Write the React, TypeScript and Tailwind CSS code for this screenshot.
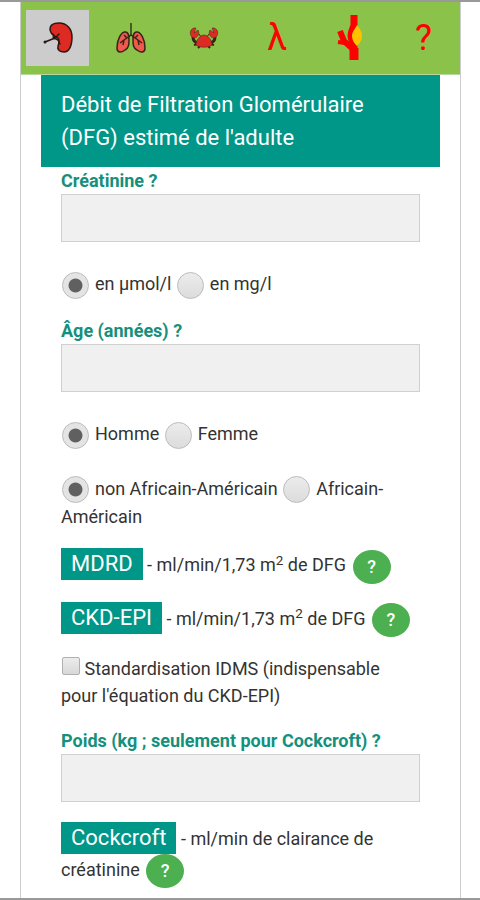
import type { ReactNode } from 'react';

function KidneyIcon() {
  return (
    <svg className="h-8 w-8" viewBox="0 0 32 32" fill="none">
      <path
        d="M8 7C8 3 12 1 17 1c8 0 13 6 13 14 0 9-3 15-8 15-4 0-7-2-6-6 1-3 2-5 0-8-3-2-8-3-8-9Z"
        fill="#dd2a22"
        stroke="#2b1713"
        strokeWidth="1.5"
      />
      <path d="M3 20l10-4 4-4M11 15l5 3 2 4M13 16l-2-4" stroke="#2b1713" strokeWidth="1.5" strokeLinecap="round" />
      <circle cx="3" cy="20" r="1.5" fill="#2b1713" />
    </svg>
  );
}

function LungsIcon() {
  return (
    <svg className="h-8 w-8" viewBox="0 0 32 32" fill="none">
      <path
        d="M11 10C6 9 2 18 2 26c0 5 4 5 8 2 4-2 4-6 4-10s0-7-3-8ZM21 10c5-1 9 8 9 16 0 5-4 5-8 2-4-2-4-6-4-10s0-7 3-8Z"
        fill="#f05a4c"
        stroke="#3a2418"
        strokeWidth="1.5"
      />
      <path d="M16 1v12" stroke="#4c5a2a" strokeWidth="2" />
      <path
        d="M16 13l-7 5-4 3M9 18l-1 5M12 16l-3-3M16 13l7 5 4 3M23 18l1 5M20 16l3-3"
        stroke="#3a2418"
        strokeWidth="1.5"
      />
    </svg>
  );
}

function CrabIcon() {
  return (
    <svg className="h-8 w-8" viewBox="0 0 32 32" fill="none" stroke="#3a2418">
      <path d="M10 21c-4-1-5-4-5-6M22 21c4-1 5-4 5-6" strokeWidth="3" />
      <path d="M10 22l-4 1M22 22l4 1M12 24l-2 2M20 24l2 2" strokeWidth="2" />
      <path d="M13 15l-2-3M19 15l2-3" />
      <path
        d="M6 6c-5 1-5 9 0 10 4 0 6-5 4-8l-4 3 2-5ZM26 6c5 1 5 9 0 10-4 0-6-5-4-8l4 3-2-5Z"
        fill="#dd2a22"
        strokeWidth="0.5"
      />
      <path d="M8 23c0-5 4-10 8-10s8 5 8 10c-3 3-13 3-16 0Z" fill="#dd2a22" strokeWidth="0.5" />
    </svg>
  );
}

function ArteryIcon() {
  return (
    <svg className="h-12 w-8" viewBox="0 0 32 48" fill="none">
      <g stroke="#fe0000" strokeLinejoin="round">
        <path d="M20 1v10c-1 4-3 6-3 11 0 4 3 6 3 11v13" strokeWidth="7" />
        <path d="M6 17l4 10 10 9" strokeWidth="6" />
        <path d="M4 28l7 1" strokeWidth="4" />
        <path d="M20 34v12" strokeWidth="9" />
      </g>
      <path d="M23 11c3 4 5 7 5 11s-2 7-5 10c-3-3-5-6-5-10s3-7 5-11Z" fill="#fdc300" />
    </svg>
  );
}

const tabs = [
  { name: 'Rein', icon: <KidneyIcon />, active: true },
  { name: 'Poumon', icon: <LungsIcon /> },
  { name: 'Cancer', icon: <CrabIcon /> },
  { name: 'Lambda', icon: <span className="text-4xl">λ</span> },
  { name: 'Artère', icon: <ArteryIcon /> },
  { name: 'Aide', icon: <span className="text-4xl">?</span> },
];

function NumberField({ id, label }: { id: string; label: string }) {
  return (
    <div>
      <label htmlFor={id} className="block font-bold text-[#14907c]">
        {label}
      </label>
      <input
        id={id}
        type="text"
        inputMode="decimal"
        className="block h-12 w-full border border-[#d0d0d0] bg-[#f0f0f0] px-2"
      />
    </div>
  );
}

interface RadioProps {
  id: string;
  name: string;
  label: string;
  defaultChecked?: boolean;
}

function Radio({ id, name, label, defaultChecked }: RadioProps) {
  return (
    <>
      <input
        id={id}
        type="radio"
        name={name}
        defaultChecked={defaultChecked}
        className="mr-1.5 ml-px inline-block size-[27px] appearance-none rounded-full border border-[#bbb] bg-linear-to-b from-[#ececec] to-[#dcdcdc] align-middle checked:bg-radial checked:from-[#606060] checked:from-36% checked:to-[#e4e4e4] checked:to-42%"
      />
      <label htmlFor={id}>{label}</label>
    </>
  );
}

function Result({ name, children }: { name: string; children: ReactNode }) {
  return (
    <p>
      <button type="button" className="h-8 bg-[#009688] px-2.5 text-[22px] leading-8 text-white">
        {name}
      </button>{' '}
      {children}{' '}
      <button
        type="button"
        aria-label={`Aide ${name}`}
        className="ml-0.5 h-[34px] w-[38px] rounded-[50%] bg-[#4caf50] align-middle font-medium text-white"
      >
        ?
      </button>
    </p>
  );
}

export default function App() {
  return (
    <div className="border-y-2 border-[#999] bg-white pr-[19px] pl-5 font-[Roboto,sans-serif] text-lg leading-[27px] text-[#333]">
      <div className="border-x border-[#ccc]">
        <nav className="flex border-b border-[#b5d99c] bg-[#8bc34a] py-2">
          {tabs.map((tab) => (
            <a
              key={tab.name}
              href="#"
              aria-label={tab.name}
              className={`mx-[5px] flex h-14 flex-1 items-center justify-center text-[#f00] ${tab.active ? 'bg-[#ccc]' : ''}`}
            >
              {tab.icon}
            </a>
          ))}
        </nav>

        <div className="px-5">
          <h1 className="bg-[#009688] px-5 py-[13px] text-[22px] leading-[33px] text-white">
            Débit de Filtration Glomérulaire (DFG) estimé de l'adulte
          </h1>
        </div>

        <form className="px-10">
          <NumberField id="creatinine" label="Créatinine ?" />
          <p className="pt-7 pb-[18px]">
            <Radio id="umol" name="unite" label="en µmol/l" defaultChecked />{' '}
            <Radio id="mg" name="unite" label="en mg/l" />
          </p>

          <NumberField id="age" label="Âge (années) ?" />
          <p className="pt-7">
            <Radio id="homme" name="sexe" label="Homme" defaultChecked />{' '}
            <Radio id="femme" name="sexe" label="Femme" />
          </p>
          <p className="pt-[26px] pb-[18px]">
            <Radio id="non-africain" name="origine" label="non Africain-Américain" defaultChecked />{' '}
            <Radio id="africain" name="origine" label="Africain-Américain" />
          </p>

          <div className="flex flex-col gap-[18px]">
            <Result name="MDRD">
              - ml/min/1,73 m<sup>2</sup> de DFG
            </Result>
            <Result name="CKD-EPI">
              - ml/min/1,73 m<sup>2</sup> de DFG
            </Result>
          </div>

          <p className="my-[18px] pr-5">
            <input
              id="idms"
              type="checkbox"
              className="ml-px size-[18px] appearance-none rounded-xs border border-[#b0b0b0] bg-linear-to-b from-[#ececec] to-[#d8d8d8] checked:bg-[#606060]"
            />{' '}
            <label htmlFor="idms">Standardisation IDMS (indispensable pour l'équation du CKD-EPI)</label>
          </p>

          <NumberField id="poids" label="Poids (kg ; seulement pour Cockcroft) ?" />
          <div className="pt-5 pb-2.5">
            <Result name="Cockcroft">- ml/min de clairance de créatinine</Result>
          </div>
        </form>
      </div>
    </div>
  );
}
